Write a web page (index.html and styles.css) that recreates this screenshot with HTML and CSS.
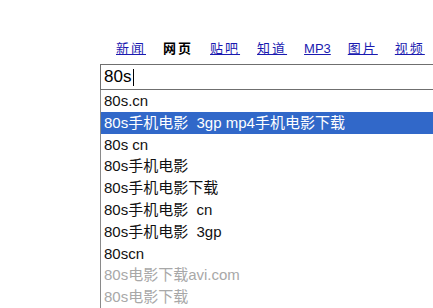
FILE: index.html
```html
<!DOCTYPE html>
<html lang="zh-CN">
<head>
    <meta charset="UTF-8">
    <title>80s</title>
    <link rel="stylesheet" href="styles.css">
</head>
<body>

<div class="search-area">
    <div class="nav-bar">
        <a class="nav-item" href="#">新闻</a>
        <span class="nav-item current">网页</span>
        <a class="nav-item" href="#">贴吧</a>
        <a class="nav-item" href="#">知道</a>
        <a class="nav-item latin" href="#">MP3</a>
        <a class="nav-item" href="#">图片</a>
        <a class="nav-item" href="#">视频</a>
    </div>

    <div class="query-box">
        <span class="query-text">80s</span><span class="caret"></span>
    </div>

    <ul class="suggest-list">
        <li>80s.cn</li>
        <li class="selected">80s手机电影  3gp mp4手机电影下载</li>
        <li>80s cn</li>
        <li>80s手机电影</li>
        <li>80s手机电影下载</li>
        <li>80s手机电影  cn</li>
        <li>80s手机电影  3gp</li>
        <li>80scn</li>
        <li class="faded">80s电影下载avi.com</li>
        <li class="faded">80s电影下载</li>
    </ul>
</div>

</body>
</html>
```

FILE: styles.css
```css
html, body {
    margin: 0;
    padding: 0;
    background: #ffffff;
    overflow: hidden;
}

.search-area {
    width: 433px;
    height: 308px;
    padding-top: 40px;
    box-sizing: border-box;
    overflow: hidden;
    font-family: "Liberation Sans", "Noto Sans CJK SC", sans-serif;
}

.nav-bar {
    display: flex;
    gap: 17px;
    padding-left: 116px;
    height: 17px;
    font-size: 13px;
    line-height: 17px;
    white-space: nowrap;
}

.nav-item {
    color: #1a1ab0;
    text-decoration: underline;
    letter-spacing: 2px;
}

.nav-item.latin {
    letter-spacing: 0;
}

.nav-item.current {
    color: #000000;
    font-weight: bold;
    text-decoration: none;
}

.query-box {
    margin-top: 7px;
    margin-left: 100px;
    width: 400px;
    height: 24px;
    border: 1px solid #6f6f6f;
    border-right: none;
    display: flex;
    align-items: center;
    padding-left: 3px;
    font-size: 17px;
    color: #000000;
}

.caret {
    display: inline-block;
    width: 1px;
    height: 17px;
    background: #000000;
    margin-left: 2px;
}

.suggest-list {
    list-style: none;
    margin: 0 0 0 100px;
    padding: 0;
    width: 400px;
    border-left: 1px solid #8a8a8a;
}

.suggest-list li {
    height: 21.8px;
    line-height: 22px;
    padding-left: 3px;
    font-size: 15px;
    color: #111111;
    white-space: pre;
}

.suggest-list li.selected {
    background: #3168c9;
    color: #ffffff;
}

.suggest-list li.faded {
    color: #a8a8a8;
}
```
